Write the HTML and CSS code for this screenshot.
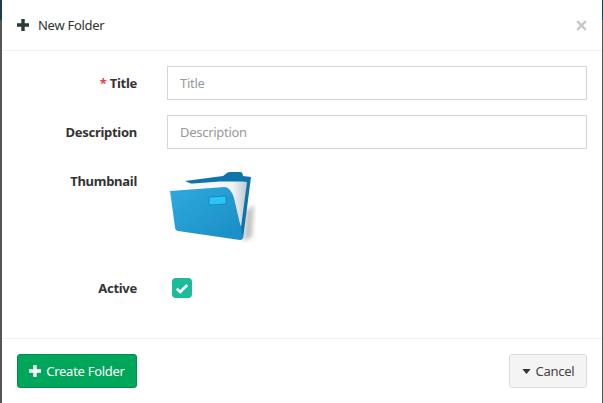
FILE: index.html
```html
<!DOCTYPE html>
<html lang="en">
<head>
<meta charset="utf-8">
<title>New Folder</title>
<link rel="stylesheet" href="styles.css">
</head>
<body>
<div class="modal">
  <header class="modal-header">
    <svg class="icon-plus" viewBox="0 0 12 12"><path d="M4.300 0h3.400v4.300h4.300v3.400h-4.300v4.300h-3.400v-4.300h-4.300v-3.400h4.300z"/></svg>
    <h1 class="modal-title">New Folder</h1>
    <svg class="icon-close" viewBox="0 0 10 10"><path d="M1.800 0.300L5 3.500L8.200 0.300L9.700 1.800L6.500 5L9.700 8.200L8.200 9.700L5 6.500L1.800 9.700L0.300 8.200L3.500 5L0.300 1.800z"/></svg>
  </header>
  <form class="modal-body">
    <div class="row">
      <label class="label"><span class="req">*</span> Title</label>
      <input class="input" type="text" placeholder="Title">
    </div>
    <div class="row">
      <label class="label">Description</label>
      <input class="input" type="text" placeholder="Description">
    </div>
    <div class="row row-thumb">
      <label class="label">Thumbnail</label>
      <svg class="folder" viewBox="0 0 90 72">
        <defs>
          <linearGradient id="front" x1="0" y1="0" x2="1" y2="1">
            <stop offset="0" stop-color="#2eaae0"/>
            <stop offset="1" stop-color="#1a8cc2"/>
          </linearGradient>
          <linearGradient id="paper" x1="0" y1="0" x2="1" y2="0">
            <stop offset="0" stop-color="#ffffff"/>
            <stop offset="0.800" stop-color="#f2f4f5"/>
            <stop offset="1" stop-color="#c0c9cf"/>
          </linearGradient>
          <filter id="soft"><feGaussianBlur stdDeviation="2"/></filter>
          <filter id="slight"><feGaussianBlur stdDeviation="0.400"/></filter>
        </defs>
        <path d="M76 40L84 34L82 66L73 70z" fill="#888" opacity="0.5" filter="url(#soft)"/>
        <g filter="url(#slight)">
          <path d="M15 10L53 5L57 2Q58 1 60 1L71 1Q73 2 73 5L81 6L73 68L60 30z" fill="#0f74ac"/>
          <path d="M3 14L50 10.500L72 10.500L77 11L71 56L60 30L5 22z" fill="url(#paper)"/>
          <path d="M0 20L55 16Q61 17 64 27L73 66Q73 69 70 69L8 60Q5 59 5 56z" fill="url(#front)"/>
          <path d="M39 26L56 25L56 33L39 34z" fill="#2cc4f6" stroke="#1580b0" stroke-width="0.800"/>
        </g>
      </svg>
    </div>
    <div class="row row-check">
      <label class="label">Active</label>
      <span class="check">
        <svg viewBox="0 0 12 10"><path d="M1.300 5.300L4.400 8.200L10.700 1.800" fill="none" stroke="#fff" stroke-width="2.400"/></svg>
      </span>
    </div>
  </form>
  <footer class="modal-footer">
    <button class="btn btn-create" type="button">
      <svg class="icon-btn-plus" viewBox="0 0 12 12"><path d="M4.300 0h3.400v4.300h4.300v3.400h-4.300v4.300h-3.400v-4.300h-4.300v-3.400h4.300z"/></svg>
      Create Folder
    </button>
    <button class="btn btn-cancel" type="button">
      <svg class="icon-caret" viewBox="0 0 10 6"><path d="M0 0h10L5 6z"/></svg>
      Cancel
    </button>
  </footer>
</div>
</body>
</html>
```

FILE: styles.css
```css
* { box-sizing: border-box; }
html, body { margin: 0; height: 100%; }
body {
  background: linear-gradient(#16404f 0, #16404f 20px, #555 20px);
  padding: 0 1px 0 2px;
  font-family: "Noto Sans", sans-serif;
  overflow: hidden;
}
.modal {
  background: #fff;
  height: 403px;
  display: flex;
  flex-direction: column;
}
.modal-header {
  height: 51px;
  border-bottom: 1px solid #f0f0f0;
  display: flex;
  align-items: center;
  padding: 0 15px 0 15px;
}
.icon-plus { width: 12px; height: 12px; fill: #2a3a35; }
.modal-title {
  margin: 0 0 0 9px;
  flex: 1;
  font-size: 13px;
  letter-spacing: -0.28px;
  font-weight: 400;
  color: #333;
}
.icon-close { width: 11px; height: 11px; fill: #c8c8cc; }
.modal-body {
  flex: 1;
  padding-top: 15px;
  display: flex;
  flex-direction: column;
}
.row { display: flex; align-items: center; margin-bottom: 15px; }
.label {
  width: 135px;
  text-align: right;
  font-size: 13px;
  letter-spacing: -0.28px;
  font-weight: 700;
  color: #333;
  margin-right: 30px;
}
.req { color: #e8434c; }
.input {
  width: 420px;
  height: 34px;
  border: 1px solid #d2d6de;
  background: #fff;
  padding: 0 12px;
  font: 13px "Noto Sans", sans-serif;
  letter-spacing: -0.28px;
  color: #333;
}
.input::placeholder { color: #999; opacity: 1; }
.row-thumb { align-items: flex-start; margin-bottom: 0; height: 114px; }
.row-thumb .label { padding-top: 8px; }
.folder { width: 90px; height: 72px; margin-top: 7px; margin-left: 3px; }
.row-check { height: 20px; }
.check {
  width: 20px;
  height: 20px;
  margin-left: 5px;
  border-radius: 4px;
  background: #1abc9c;
  display: flex;
  align-items: center;
  justify-content: center;
}
.check svg { width: 14px; height: 11px; }
.modal-footer {
  height: 65px;
  border-top: 1px solid #f0f0f0;
  display: flex;
  justify-content: space-between;
  align-items: center;
  padding: 0 15px;
}
.btn {
  height: 34px;
  border-radius: 3px;
  font: 13px "Noto Sans", sans-serif;
  letter-spacing: -0.28px;
  display: flex;
  align-items: center;
  justify-content: center;
}
.btn-create {
  width: 120px;
  background: #00a65a;
  border: 1px solid #008d4c;
  color: #fff;
}
.icon-btn-plus { width: 12px; height: 12px; fill: #fff; margin-right: 5px; }
.btn-cancel {
  width: 78px;
  background: #f4f4f4;
  border: 1px solid #ddd;
  color: #444;
}
.icon-caret { width: 9px; height: 5px; fill: #333; margin-right: 5px; }
```
